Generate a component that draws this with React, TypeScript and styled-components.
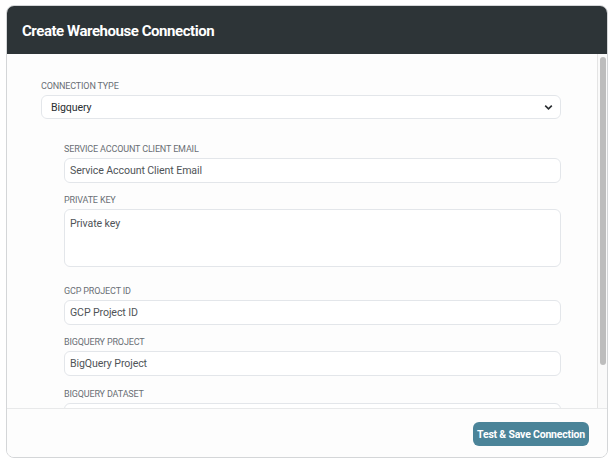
import React from "react";
import styled, { createGlobalStyle } from "styled-components";

const Global = createGlobalStyle`
  html, body { margin: 0; padding: 0; background: #ffffff; }
  body { font-family: Roboto, "Liberation Sans", Arial, sans-serif; }
  * { box-sizing: border-box; }
`;

const Modal = styled.div`
  margin: 5px 6px;
  width: 602px;
  height: 453px;
  border: 1px solid #d4d6d8;
  border-radius: 8px;
  overflow: hidden;
  display: flex;
  flex-direction: column;
  background: #fdfdfd;
`;

const Header = styled.div`
  height: 48px;
  flex: none;
  background: #2d3437;
  display: flex;
  align-items: center;
  padding-left: 15px;
  padding-top: 2px;
`;

const Title = styled.h1`
  margin: 0;
  color: #ffffff;
  font-size: 15px;
  font-weight: 700;
  letter-spacing: -0.45px;
`;

const Body = styled.div`
  height: 354px;
  flex: none;
  display: flex;
  overflow: hidden;
`;

const Viewport = styled.div`
  flex: 1;
  overflow: hidden;
`;

const ScrollTrack = styled.div`
  width: 10px;
  flex: none;
  background: #fafafa;
  border-left: 1px solid #e4e4e4;
  padding: 3px 1px 0 2px;
`;

const ScrollThumb = styled.div`
  height: 308px;
  border-radius: 3px;
  background: #bdbdbd;
`;

const Content = styled.div`
  padding: 27px 36px 34px 34px;
`;

const Group = styled.div`
  padding-left: 23px;
  padding-top: 13px;
`;

const Field = styled.div<{ $gap?: number }>`
  display: flex;
  flex-direction: column;
  margin-bottom: ${(p) => (p.$gap ?? 12)}px;
  &:last-child { margin-bottom: 0; }
`;

const Label = styled.label`
  display: block;
  height: 10px;
  line-height: 10px;
  font-size: 9px;
  color: #6a6f75;
  text-transform: uppercase;
  letter-spacing: -0.15px;
  margin-bottom: 4px;
`;

const Input = styled.div`
  height: 25px;
  border: 1px solid #e3e6ea;
  border-radius: 6px;
  background: #ffffff;
  display: flex;
  align-items: center;
  padding: 0 5px;
  font-size: 10.6px;
  color: #4f5458;
  letter-spacing: -0.1px;
`;

const TextArea = styled(Input)`
  height: 58px;
  align-items: flex-start;
  padding-top: 7px;
`;

const Select = styled(Input)`
  height: 24px;
  justify-content: space-between;
  padding: 0 7px 0 9px;
  color: #2a2e31;
`;

const Footer = styled.div`
  flex: 1;
  border-top: 1px solid #e8e9ea;
  display: flex;
  justify-content: flex-end;
  align-items: center;
  padding: 2px 18px 0 0;
  background: #fdfdfd;
`;

const Button = styled.button`
  height: 24px;
  width: 116px;
  border: none;
  border-radius: 6px;
  background: #4b8499;
  color: #ffffff;
  font-family: Roboto, "Liberation Sans", Arial, sans-serif;
  font-size: 10.5px;
  font-weight: 700;
  letter-spacing: -0.2px;
  padding: 0;
`;

const Chevron = () => (
  <svg width="9" height="7" viewBox="0 0 9 7">
    <path d="M1.2 1.6 L4.5 4.9 L7.8 1.6" fill="none" stroke="#2a2e31" strokeWidth="1.6" />
  </svg>
);

export default function App() {
  return (
    <>
      <Global />
      <Modal>
        <Header>
          <Title>Create Warehouse Connection</Title>
        </Header>
        <Body>
          <Viewport>
            <Content>
              <Field>
                <Label>Connection Type</Label>
                <Select>
                  <span>Bigquery</span>
                  <Chevron />
                </Select>
              </Field>
              <Group>
                <Field>
                  <Label>Service Account Client Email</Label>
                  <Input>Service Account Client Email</Input>
                </Field>
                <Field $gap={19}>
                  <Label>Private Key</Label>
                  <TextArea>Private key</TextArea>
                </Field>
                <Field $gap={12}>
                  <Label>GCP Project ID</Label>
                  <Input>GCP Project ID</Input>
                </Field>
                <Field $gap={13}>
                  <Label>BigQuery Project</Label>
                  <Input>BigQuery Project</Input>
                </Field>
                <Field>
                  <Label>BigQuery Dataset</Label>
                  <Input></Input>
                </Field>
              </Group>
            </Content>
          </Viewport>
          <ScrollTrack>
            <ScrollThumb />
          </ScrollTrack>
        </Body>
        <Footer>
          <Button>Test &amp; Save Connection</Button>
        </Footer>
      </Modal>
    </>
  );
}
